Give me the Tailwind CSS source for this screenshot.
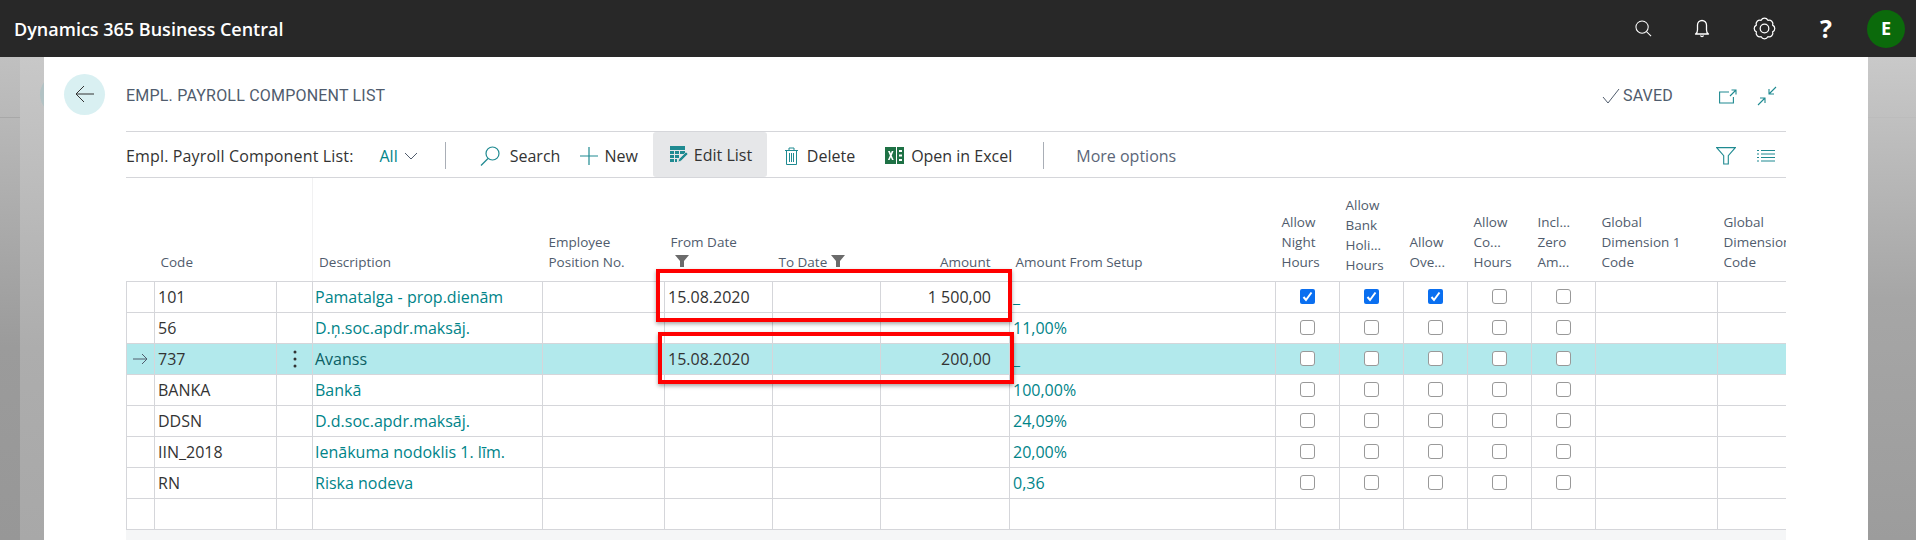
<!DOCTYPE html>
<html lang="en">
  <head>
    <meta charset="UTF-8" />
    <meta name="viewport" content="width=device-width, initial-scale=1.0" />
    <title>Empl. Payroll Component List - Dynamics 365 Business Central</title>
    <script src="https://cdn.jsdelivr.net/npm/@tailwindcss/browser@4"></script>
  </head>
  <body class="overflow-hidden bg-white">
    <div class="relative flex h-[540px] w-[1916px] flex-col overflow-hidden font-['Open_Sans',sans-serif]">
      <!-- Top bar -->
      <header class="relative z-10 flex h-[57px] shrink-0 items-center bg-[#282828] text-white">
        <div class="ml-[14px] text-[18px] font-semibold leading-none">Dynamics 365 Business Central</div>
        <div class="ml-auto flex items-center">
          <svg class="h-[17px] w-[17px]" viewBox="0 0 18 18" fill="none" stroke="currentColor" stroke-width="1.1"><circle cx="7.5" cy="7.5" r="6.5"/><path d="M12.2 12.2 17 17"/></svg>
          <svg class="ml-[42px] h-[19px] w-[16px]" viewBox="0 0 16 19" fill="none" stroke="currentColor" stroke-width="1.3" stroke-linejoin="round"><path d="M1.500 15c1.500-.8 2-2 2-4V6a4.500 4.500 0 0 1 9 0v5c0 2 .5 3.200 2 4z"/><path d="M6.500 16.500a1.600 1.600 0 0 0 3 0"/></svg>
          <svg class="ml-[43px] h-[23px] w-[23px]" viewBox="0 0 24 24" fill="none" stroke="currentColor" stroke-width="1.300" stroke-linejoin="round"><path d="M20.500 8.480A3.900 3.900 0 0 1 20.500 15.520A3.900 3.900 0 0 1 15.520 20.500A3.900 3.900 0 0 1 8.480 20.500A3.900 3.900 0 0 1 3.500 15.520A3.900 3.900 0 0 1 3.500 8.480A3.900 3.900 0 0 1 8.480 3.500A3.900 3.900 0 0 1 15.520 3.500A3.900 3.900 0 0 1 20.500 8.480z"/><circle cx="12" cy="12" r="4.500"/></svg>
          <span class="ml-[44px] w-[12px] text-center text-[25px] font-bold leading-none">?</span>
          <div class="mr-[11px] ml-[35px] flex h-[38px] w-[38px] items-center justify-center rounded-full bg-[#0b6a0b] text-[18px] font-bold">E</div>
        </div>
      </header>

      <div class="flex min-h-0 flex-1">
        <!-- Page behind the dialog -->
        <div class="relative w-[44px] shrink-0 overflow-hidden bg-gradient-to-b from-[#c8c8c8] via-[#adadad] via-60% to-[#a8a8a8]">
          <div class="h-full w-[20px] bg-gradient-to-b from-[#c0c0c0] via-[#9b9b9b] via-60% to-[#979797]"></div>
          <div class="absolute top-[60px] left-0 h-px w-[20px] bg-[#a8a8a8]"></div>
          <div class="absolute top-[17px] left-[40px] h-[41px] w-[41px] rounded-full bg-[#b2c2c4]"></div>
        </div>

        <!-- Dialog -->
        <main class="relative min-w-0 flex-1 bg-white">
          <div class="flex h-[74px] items-center pl-[20px]">
            <div class="flex h-[41px] w-[41px] items-center justify-center rounded-full bg-[#d9f0f2]">
              <svg class="h-[18px] w-[20px] text-[#333]" viewBox="0 0 20 18" fill="none" stroke="currentColor" stroke-width="1"><path d="M19 9H1M9 1 1 9l8 8"/></svg>
            </div>
            <h1 class="mt-[4px] ml-[21px] text-[16px] leading-none tracking-[0.2px] text-[#505c6d] font-['Roboto',sans-serif]">EMPL. PAYROLL COMPONENT LIST</h1>
            <div class="mt-[4px] ml-auto flex items-center">
              <svg class="h-[16px] w-[18px] text-[#505c6d]" viewBox="0 0 18 16" fill="none" stroke="currentColor" stroke-width="1"><path d="M1 9l5 6L17 1"/></svg>
              <span class="ml-[3px] text-[16px] leading-none tracking-[0.2px] text-[#505c6d] font-['Roboto',sans-serif]">SAVED</span>
              <svg class="ml-[46px] h-[15px] w-[18px] text-[#1f8a91]" viewBox="0 0 18 15" fill="none" stroke="currentColor" stroke-width="1.1"><path d="M10 3H.6v11h13.800V8M11 7l6-6M12.500 1H17v4.500"/></svg>
              <svg class="mr-[91px] ml-[20px] h-[20px] w-[20px] text-[#1f8a91]" viewBox="0 0 20 20" fill="none" stroke="currentColor" stroke-width="1.1"><path d="M19 1l-7 7M12 3v5h5M1 19l7-7M3 12h5v5"/></svg>
            </div>
          </div>

          <!-- Action bar -->
          <div class="mr-[82px] ml-[82px] flex h-[47px] items-center border-y border-[#d5d6da] pt-[2px] text-[16px] text-[#333]">
            <span class="font-medium tracking-[0.15px]">Empl. Payroll Component List:</span>
            <span class="ml-[26px] font-medium text-[#008489]">All</span>
            <svg class="ml-[6px] h-[8px] w-[14px] text-[#505c6d]" viewBox="0 0 14 8" fill="none" stroke="currentColor" stroke-width="1"><path d="M1 1l6 6 6-6"/></svg>
            <div class="ml-[27px] h-[27px] w-px bg-[#a9aeb6]"></div>
            <svg class="ml-[34px] h-[20px] w-[20px] text-[#1f8a91]" viewBox="0 0 20 20" fill="none" stroke="currentColor" stroke-width="1.2"><circle cx="12.500" cy="7.500" r="6.500"/><path d="M8 12.500 1 19.500"/></svg>
            <span class="ml-[10px]">Search</span>
            <svg class="ml-[20px] h-[18px] w-[18px] text-[#1f8a91]" viewBox="0 0 18 18" fill="none" stroke="currentColor" stroke-width="1.2"><path d="M9 0v18M0 9h18"/></svg>
            <span class="ml-[6px]">New</span>
            <div class="ml-[15px] flex h-[45px] w-[114px] items-center self-end rounded-[3px] bg-[#e6e7e9] pl-[17px]">
              <svg class="h-[18px] w-[18px]" viewBox="0 0 18 18"><path fill="#1f8a91" d="M0 0h15v4H0zM0 5h4v3H0zM5 5h4v3H5zM10 5h5v3h-5zM0 9h4v3H0zM5 9h4v3H5zM0 13h4v3H0zM5 13h2v3H5z"/><path fill="#1f8a91" stroke="#e6e7e9" stroke-width=".6" d="m9 13 7-7 2 2-7 7-3 1z"/></svg>
              <span class="ml-[6px]">Edit List</span>
            </div>
            <svg class="ml-[18px] h-[18px] w-[13px] text-[#1f8a91]" viewBox="0 0 13 18" fill="none" stroke="currentColor" stroke-width="1"><path d="M0 3.500h13M4 3.500V1h5v2.500M1.500 3.500v14h10v-14M4.500 6v9M6.500 6v9M8.500 6v9"/></svg>
            <span class="ml-[9px]">Delete</span>
            <svg class="ml-[30px] h-[19px] w-[19px]" viewBox="0 0 19 19"><path fill="#1e7145" d="M0 1h11v17H0zM12 1h7v17h-7z"/><path fill="#fff" d="M14 4h3v2h-3zM14 8.500h3v2h-3zM14 13h3v2h-3zM3 5h1.800l1 2.400 1-2.400h1.700L6.700 9.500l2 4.500H7l-1.200-2.800L4.600 14H2.900l2-4.500z"/></svg>
            <span class="ml-[7px]">Open in Excel</span>
            <div class="ml-[31px] h-[27px] w-px bg-[#a9aeb6]"></div>
            <span class="ml-[32px] text-[#5b6678]">More options</span>
            <svg class="mr-[30px] ml-auto h-[18px] w-[20px] text-[#1f8a91]" viewBox="0 0 20 18" fill="none" stroke="currentColor" stroke-width="1.1"><path d="M.7.6h18.600l-7 8V17H7.700V8.600z"/></svg>
            <svg class="mr-[11px] -ml-[9px] h-[14px] w-[18px] text-[#1f8a91]" viewBox="0 0 18 14" fill="none" stroke="currentColor" stroke-width="1.1"><path d="M4 1.500h14M4 5h14M4 8.500h14M4 12h14M0 1.500h2M0 5h2M0 8.500h2M0 12h2"/></svg>
          </div>

          <!-- List -->
          <div class="mr-[82px] ml-[82px] overflow-hidden">
            <table class="w-[1713px] table-fixed border-collapse text-[16px] text-[#333]">
              <colgroup>
                <col class="w-[28px]" /><col class="w-[122px]" /><col class="w-[36px]" /><col class="w-[230px]" />
                <col class="w-[122px]" /><col class="w-[108px]" /><col class="w-[108px]" /><col class="w-[129px]" />
                <col class="w-[266px]" /><col class="w-[64px]" /><col class="w-[64px]" /><col class="w-[64px]" />
                <col class="w-[64px]" /><col class="w-[64px]" /><col class="w-[122px]" /><col class="w-[122px]" />
              </colgroup>
              <thead>
                <tr class="h-[103px] text-left align-bottom text-[13.5px] leading-[20px] font-normal text-[#505c6d]">
                  <th class="border-b border-[#d5d6da]"></th>
                  <th class="border-b border-[#d5d6da] pb-[9px] pl-[6px] font-normal">Code</th>
                  <th class="border-b border-[#d5d6da]"></th>
                  <th class="border-b border-l border-[#d5d6da] border-l-[#f1f1f2] pb-[9px] pl-[6px] font-normal">Description</th>
                  <th class="border-b border-[#d5d6da] pb-[9px] pl-[6px] font-normal">Employee<br />Position No.</th>
                  <th class="border-b border-[#d5d6da] pb-[14px] pl-[6px] font-normal">
                    From Date
                    <svg class="mt-[3px] ml-[4px] block h-[12px] w-[14px] text-[#6b6b6b]" viewBox="0 0 14 12"><path fill="currentColor" d="M0 0h14L9 6v6H5V6z"/></svg>
                  </th>
                  <th class="border-b border-[#d5d6da] pb-[9px] pl-[6px] font-normal whitespace-nowrap">
                    To Date<svg class="mb-[3px] ml-[4px] inline-block h-[12px] w-[14px] text-[#6b6b6b]" viewBox="0 0 14 12"><path fill="currentColor" d="M0 0h14L9 6v6H5V6z"/></svg>
                  </th>
                  <th class="border-b border-[#d5d6da] pr-[19px] pb-[9px] text-right font-normal">Amount</th>
                  <th class="border-b border-[#d5d6da] pb-[9px] pl-[6px] font-normal">Amount From Setup</th>
                  <th class="border-b border-[#d5d6da] pb-[9px] pl-[6px] font-normal">Allow<br />Night<br />Hours</th>
                  <th class="border-b border-[#d5d6da] pb-[6px] pl-[6px] font-normal">Allow<br />Bank<br />Holi...<br />Hours</th>
                  <th class="border-b border-[#d5d6da] pb-[9px] pl-[6px] font-normal">Allow<br />Ove...</th>
                  <th class="border-b border-[#d5d6da] pb-[9px] pl-[6px] font-normal">Allow<br />Co...<br />Hours</th>
                  <th class="border-b border-[#d5d6da] pb-[9px] pl-[6px] font-normal">Incl...<br />Zero<br />Am...</th>
                  <th class="border-b border-[#d5d6da] pb-[9px] pl-[6px] font-normal">Global<br />Dimension 1<br />Code</th>
                  <th class="border-b border-[#d5d6da] pb-[9px] pl-[6px] font-normal">Global<br />Dimension 2<br />Code</th>
                </tr>
              </thead>
              <tbody class="payroll-rows"></tbody>
            </table>
          </div>
          <div class="mr-[82px] ml-[82px] h-[12px] bg-[#f5f6f7]"></div>

          <!-- Red marks drawn over the screenshot -->
          <div class="absolute top-[212px] left-[612px] h-[53px] w-[356px] border-4 border-[#ff0000] shadow-[0_2px_4px_rgba(0,0,0,0.35)]"></div>
          <div class="absolute top-[275px] left-[614px] h-[52px] w-[356px] border-4 border-[#ff0000] shadow-[0_2px_4px_rgba(0,0,0,0.35)]"></div>
        </main>

        <div class="w-[48px] shrink-0 bg-gradient-to-b from-[#c9c9c9] via-[#a6a6a6] via-50% to-[#9c9c9c]">
          <div class="mt-[60px] h-px bg-[#bcbcbc]"></div>
        </div>
      </div>
    </div>

    <script>
      const rows = [
        { code: '101', desc: 'Pamatalga - prop.dienām', from: '15.08.2020', amount: '1 500,00', setup: '_', checks: 3 },
        { code: '56', desc: 'D.ņ.soc.apdr.maksāj.', setup: '11,00%' },
        { code: '737', desc: 'Avanss', from: '15.08.2020', amount: '200,00', setup: '_', current: true },
        { code: 'BANKA', desc: 'Bankā', setup: '100,00%' },
        { code: 'DDSN', desc: 'D.d.soc.apdr.maksāj.', setup: '24,09%' },
        { code: 'IIN_2018', desc: 'Ienākuma nodoklis 1. līm.', setup: '20,00%' },
        { code: 'RN', desc: 'Riska nodeva', setup: '0,36' },
        {}
      ];
      const cell = 'h-[31px] overflow-hidden whitespace-nowrap border border-[#d5d6da] p-0 leading-none';

      function checkbox(on) {
        if (on) {
          return `<span class="mx-auto flex h-[15px] w-[15px] items-center justify-center rounded-[2px] bg-[#0a6ff0]"><svg class="h-[11px] w-[11px]" viewBox="0 0 11 11" fill="none" stroke="#fff" stroke-width="2"><path d="M1.500 6l2.500 3 5.500-7.500"/></svg></span>`;
        }
        return `<span class="mx-auto block h-[15px] w-[15px] rounded-[3px] border-[1.5px] border-[#999] bg-white"></span>`;
      }

      document.querySelector('.payroll-rows').innerHTML = rows.map(function (row) {
        let boxes = '';
        for (let i = 0; i < 5; i++) {
          boxes += `<td class="${cell}">${row.code ? checkbox(i < (row.checks || 0)) : ''}</td>`;
        }
        const arrow = row.current
          ? `<svg class="ml-[6px] h-[12px] w-[15px] text-[#505c6d]" viewBox="0 0 15 12" fill="none" stroke="currentColor" stroke-width="1"><path d="M0 6h14M9 1l5 5-5 5"/></svg>`
          : '';
        const dots = row.current
          ? `<svg class="mx-auto h-[18px] w-[4px] text-[#333]" viewBox="0 0 4 18" fill="currentColor"><circle cx="2" cy="2" r="1.500"/><circle cx="2" cy="9" r="1.500"/><circle cx="2" cy="16" r="1.500"/></svg>`
          : '';
        return `
          <tr class="${row.current ? 'bg-[#b2e9ec]' : ''}">
            <td class="${cell}">${arrow}</td>
            <td class="${cell} pl-[3px]">${row.code || ''}</td>
            <td class="${cell}">${dots}</td>
            <td class="${cell} pl-[2px] ${row.current ? 'text-[#0b5f64]' : 'text-[#008489]'}">${row.desc || ''}</td>
            <td class="${cell}"></td>
            <td class="${cell} pl-[3px]">${row.from || ''}</td>
            <td class="${cell}"></td>
            <td class="${cell} pr-[18px] text-right">${row.amount || ''}</td>
            <td class="${cell} pl-[3px] text-[#008489]">${row.setup || ''}</td>
            ${boxes}
            <td class="${cell}"></td>
            <td class="${cell}"></td>
          </tr>`;
      }).join('');
    </script>
  </body>
</html>
